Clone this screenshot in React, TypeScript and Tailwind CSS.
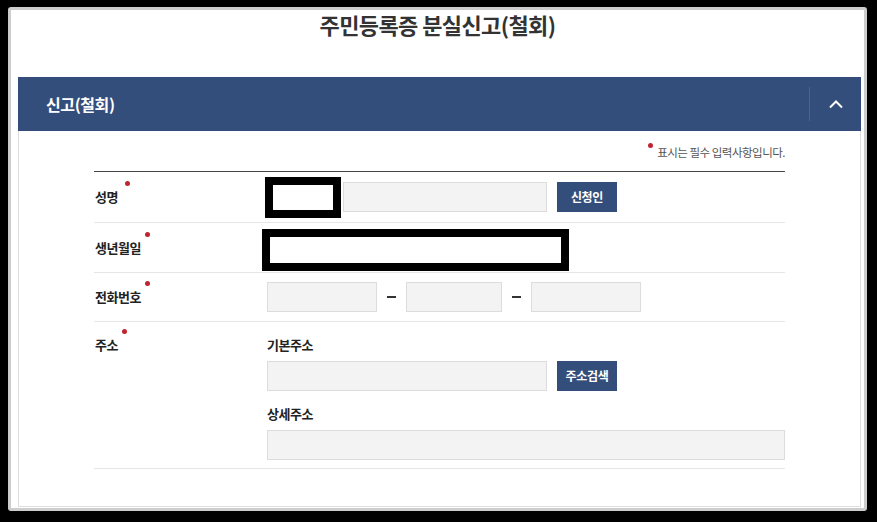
const font = { fontFamily: '"Noto Sans CJK KR", "Noto Sans", sans-serif' };

const Dot = ({ className = "" }: { className?: string }) => (
  <span className={`inline-block w-[5px] h-[5px] rounded-full bg-[#c0242f] ${className}`} />
);

const Field = ({ w }: { w: string }) => (
  <div className={`${w} h-[30px] bg-[#f3f3f3] border border-[#dcdcdc]`} />
);

const Btn = ({ label }: { label: string }) => (
  <button className="h-[30px] w-[60px] bg-[#344e7b] text-white text-[12px] font-bold tracking-[-0.3px]">
    {label}
  </button>
);

const Label = ({ text, dot = "ml-[5px]" }: { text: string; dot?: string }) => (
  <div className="w-[173px] shrink-0 flex items-start pl-px">
    <span className="text-[13px] leading-[20px] font-bold text-[#222] tracking-[-0.5px]">{text}</span>
    <Dot className={`${dot} -mt-[6px]`} />
  </div>
);

export default function App() {
  return (
    <div className="w-[877px] h-[522px] bg-black pt-[7px] pl-[8px]" style={font}>
      <div className="w-[859px] h-[504px] bg-white border-[3px] border-[#cdcdcd] rounded-[3px] flex flex-col">
        <h1 className="h-[67px] pt-[1px] text-center text-[22px] leading-[26px] font-bold text-[#333] tracking-[-0.6px]">
          주민등록증 분실신고(철회)
        </h1>

        <section className="ml-[7px] w-[843px] h-[430px] flex flex-col border-x border-b border-[#dedede]">
          <header className="h-[54px] bg-[#344e7b] flex items-center shrink-0 -mx-px">
            <span className="flex-1 pl-[28px] text-white text-[16px] font-bold tracking-[-0.4px]">신고(철회)</span>
            <div className="w-px h-[34px] bg-[#4b6391]" />
            <div className="w-[51px] flex justify-center">
              <svg width="16" height="10" viewBox="0 0 16 10">
                <polyline points="2,8.5 8,2.5 14,8.5" fill="none" stroke="white" strokeWidth="2" />
              </svg>
            </div>
          </header>

          <div className="ml-[75px] w-[691px]">
            <div className="pt-[13px] h-[40px] flex justify-end items-start">
              <Dot className="-mt-[1px] mr-[4px]" />
              <span className="text-[11.5px] leading-[16px] text-[#555] tracking-[-0.5px]">표시는 필수 입력사항입니다.</span>
            </div>

            <div className="border-t border-[#444]">
              {/* 성명 */}
              <div className="h-[51px] flex items-center border-b border-[#e6e6e6]">
                <Label text="성명" dot="ml-[7px]" />
                <div className="flex items-center -ml-[2px]">
                  <div className="w-[76px] h-[41px] border-[8px] border-black bg-white" />
                  <div className="ml-[2px]"><Field w="w-[204px]" /></div>
                  <div className="ml-[10px]"><Btn label="신청인" /></div>
                </div>
              </div>

              {/* 생년월일 */}
              <div className="h-[50px] flex items-center border-b border-[#e6e6e6]">
                <Label text="생년월일" dot="ml-[4px]" />
                <div className="-ml-[5px] mt-[4px] w-[307px] h-[42px] border-[8px] border-black bg-white" />
              </div>

              {/* 전화번호 */}
              <div className="h-[49px] flex items-center border-b border-[#e6e6e6]">
                <Label text="전화번호" dot="ml-[4px]" />
                <Field w="w-[110px]" />
                <div className="w-[9px] h-[2px] bg-[#333] mx-[10px]" />
                <Field w="w-[96px]" />
                <div className="w-[9px] h-[2px] bg-[#333] mx-[10px]" />
                <Field w="w-[110px]" />
              </div>

              {/* 주소 */}
              <div className="flex pt-[13px] pb-[8px] border-b border-[#e6e6e6]">
                <Label text="주소" dot="ml-[4px]" />
                <div className="flex-1 flex flex-col">
                  <span className="text-[13px] leading-[20px] font-bold text-[#222] tracking-[-0.5px]">기본주소</span>
                  <div className="mt-[6px] flex items-center">
                    <Field w="w-[280px]" />
                    <div className="ml-[10px]"><Btn label="주소검색" /></div>
                  </div>
                  <span className="mt-[13px] text-[13px] leading-[20px] font-bold text-[#222] tracking-[-0.5px]">상세주소</span>
                  <div className="mt-[6px]"><Field w="w-full" /></div>
                </div>
              </div>
            </div>
          </div>
        </section>
      </div>
    </div>
  );
}
